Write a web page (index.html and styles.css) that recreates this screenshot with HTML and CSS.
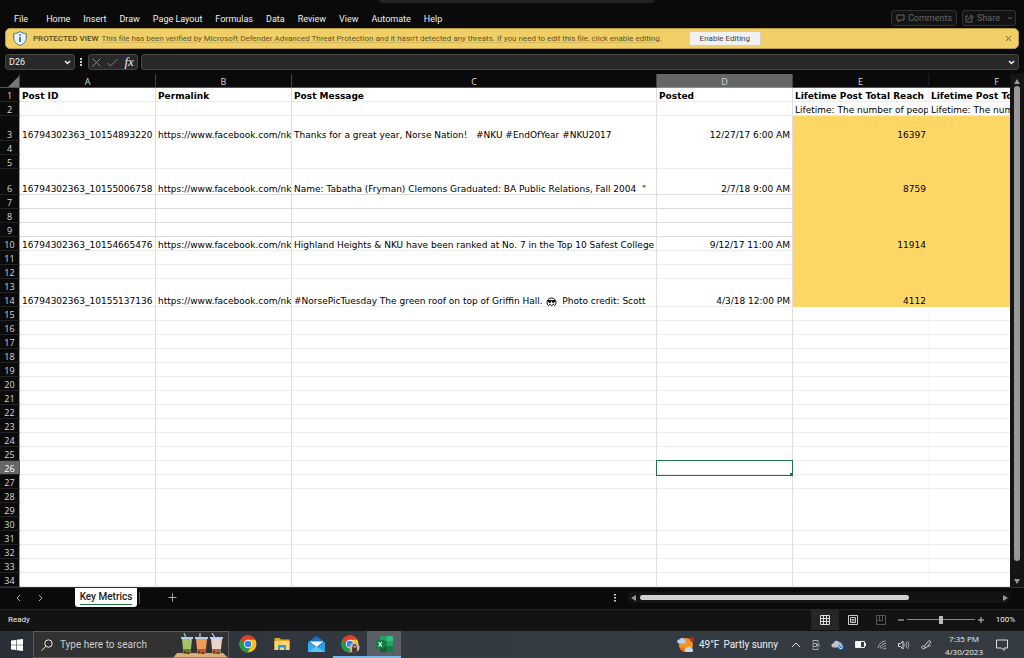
FILE: index.html
```html
<!DOCTYPE html>
<html lang="en">
<head>
  <meta charset="UTF-8" />
  <meta name="viewport" content="width=device-width, initial-scale=1.0"/>
  <title>Key Metrics</title>
  <link rel="stylesheet" href="styles.css">
</head>
<body>

  <header class="ribbon">
    <div class="title-search"></div>
    <nav class="menu">
      <a href="#" class="file">File</a>
      <a href="#">Home</a>
      <a href="#">Insert</a>
      <a href="#">Draw</a>
      <a href="#">Page Layout</a>
      <a href="#">Formulas</a>
      <a href="#">Data</a>
      <a href="#">Review</a>
      <a href="#">View</a>
      <a href="#">Automate</a>
      <a href="#">Help</a>
    </nav>
    <div class="ribbon-actions">
      <button class="ghost">
        <svg width="9" height="9" viewBox="0 0 9 9" fill="none" stroke="currentColor"><path d="M1 1h7v5H4L2.500 8V6H1z"/></svg>
        Comments
      </button>
      <button class="ghost share">
        <svg width="9" height="9" viewBox="0 0 9 9" fill="none" stroke="currentColor"><path d="M3 2H1v6h6V6M3 6c0-2 1-3 3-3V1l2.500 2.500L6 5.500V4"/></svg>
        Share
        <svg class="caret" width="6" height="4" viewBox="0 0 6 4" fill="none" stroke="currentColor"><path d="M1 1l2 2 2-2"/></svg>
      </button>
    </div>
  </header>

  <section class="banner">
    <svg width="14" height="15" viewBox="0 0 14 15"><path d="M7 .5C5 2 3 2.500 .8 2.600v4.400c0 3.500 2.500 6 6.200 7.500 3.700-1.500 6.200-4 6.200-7.500V2.600C11 2.500 9 2 7 .5z" fill="#e9f1f7" stroke="#3d6f9f"/><path d="M7 3.200v1.600M7 6v5" stroke="#1d63ac" stroke-width="1.600"/></svg>
    <strong>PROTECTED VIEW</strong>
    <a href="#">This file has been verified by Microsoft Defender Advanced Threat Protection and it hasn't detected any threats. If you need to edit this file, click enable editing.</a>
    <button class="enable">Enable Editing</button>
    <button class="close" aria-label="Close"><svg width="7" height="7" viewBox="0 0 7 7" stroke="#76672f" fill="none"><path d="M1 1l5 5M6 1L1 6"/></svg></button>
  </section>

  <section class="formula-bar">
    <div class="name-box">
      <input type="text" value="D26" aria-label="Name box">
      <svg width="7" height="5" viewBox="0 0 7 5" fill="none" stroke="#fff" stroke-width="1.300"><path d="M1 1l2.500 2.500L6 1"/></svg>
    </div>
    <svg class="dots" width="3" height="9" viewBox="0 0 3 9" fill="#ccc"><path d="M0 0h2v2H0zM0 3h2v2H0zM0 6h2v2H0z"/></svg>
    <div class="fx-buttons">
      <button aria-label="Cancel"><svg width="9" height="9" viewBox="0 0 9 9" fill="none" stroke="#858585"><path d="M.5 .5l8 8M8.500 .5l-8 8"/></svg></button>
      <button aria-label="Enter"><svg width="11" height="9" viewBox="0 0 11 9" fill="none" stroke="#858585"><path d="M.5 5l3 3L10.500 1"/></svg></button>
      <button class="fx">fx</button>
    </div>
    <div class="formula">
      <input type="text" aria-label="Formula">
      <svg width="7" height="5" viewBox="0 0 7 5" fill="none" stroke="#fff" stroke-width="1.300"><path d="M1 1l2.500 2.500L6 1"/></svg>
    </div>
  </section>

  <main class="workspace">
    <div class="grid-view">
      <table class="sheet">
        <colgroup>
          <col class="w-num"><col class="w-col"><col class="w-col"><col class="w-msg"><col class="w-col"><col class="w-col"><col class="w-col">
        </colgroup>
        <thead>
          <tr>
            <th class="corner"><svg width="11" height="11" viewBox="0 0 11 11"><path d="M11 0v11H0z" fill="#777"/></svg></th>
            <th>A</th><th>B</th><th>C</th><th class="active">D</th><th class="plain">E</th><th class="plain">F</th>
          </tr>
        </thead>
        <tbody id="rows"></tbody>
      </table>
    </div>
    <div class="vscroll">
      <svg width="8" height="6" viewBox="0 0 8 6"><path d="M4 1l3 5H1z" fill="#999"/></svg>
      <div class="vthumb"></div>
      <svg width="8" height="6" viewBox="0 0 8 6"><path d="M4 5l3-5H1z" fill="#999"/></svg>
    </div>
  </main>

  <section class="tab-bar">
    <button class="arrow" aria-label="Previous sheet"><svg width="5" height="8" viewBox="0 0 5 8" fill="none" stroke="#aaa"><path d="M4 1L1 4l3 3"/></svg></button>
    <button class="arrow" aria-label="Next sheet"><svg width="5" height="8" viewBox="0 0 5 8" fill="none" stroke="#aaa"><path d="M1 1l3 3-3 3"/></svg></button>
    <button class="tab"><span>Key Metrics</span></button>
    <span class="divider"></span>
    <button class="add" aria-label="New sheet"><svg width="9" height="9" viewBox="0 0 9 9" stroke="#aaa"><path d="M4.500 .5v8M.5 4.500h8"/></svg></button>
    <svg class="grip" width="3" height="8" viewBox="0 0 3 8" fill="#ccc"><path d="M0 0h2v1.500H0zM0 3h2v1.500H0zM0 6h2v1.500H0z"/></svg>
    <div class="hscroll">
      <svg width="5" height="8" viewBox="0 0 5 8"><path d="M5 1v6L0 4z" fill="#999"/></svg>
      <div class="htrack"><div class="hthumb"></div></div>
      <svg width="5" height="8" viewBox="0 0 5 8"><path d="M0 1v6l5-3z" fill="#999"/></svg>
    </div>
  </section>

  <section class="status">
    <span class="ready">Ready</span>
    <button class="view on" aria-label="Normal"><svg width="10" height="10" viewBox="0 0 10 10" fill="none" stroke="#ddd"><path d="M.5 .5h9v9h-9zM3.500 .5v9M6.500 .5v9M.5 3.500h9M.5 6.500h9"/></svg></button>
    <button class="view" aria-label="Page layout"><svg width="10" height="10" viewBox="0 0 10 10" fill="none" stroke="#ccc"><path d="M.5 .5h9v9h-9zM2.500 2.500h5v5h-5zM3.500 4.500h3M3.500 6h3"/></svg></button>
    <button class="view" aria-label="Page break"><svg width="10" height="10" viewBox="0 0 10 10" fill="none" stroke="#555"><path d="M.5 .5h9v9h-9zM3.500 .5v5M.5 5.500h6V.5"/></svg></button>
    <button class="zoom-btn" aria-label="Zoom out"><svg width="6" height="6" viewBox="0 0 6 6" stroke="#ccc"><path d="M0 3h6"/></svg></button>
    <input type="range" min="0" max="100" value="50" aria-label="Zoom">
    <button class="zoom-btn" aria-label="Zoom in"><svg width="6" height="6" viewBox="0 0 6 6" stroke="#ccc"><path d="M0 3h6M3 0v6"/></svg></button>
    <span class="percent">100%</span>
  </section>

  <footer class="taskbar">
    <button class="start" aria-label="Start"><svg width="12" height="12" viewBox="0 0 12 12" fill="#fff"><path d="M0 1.600l5-.7v4.800H0zM5.600 .8L12 0v5.700H5.600zM0 6.300h5v4.800l-5-.7zM5.600 6.300H12V12l-6.400-.8z"/></svg></button>
    <div class="search">
      <svg width="12" height="12" viewBox="0 0 12 12" fill="none" stroke="#eee"><circle cx="7.500" cy="4.500" r="3.700"/><path d="M5 7.200L.7 11.500"/></svg>
      <input type="text" placeholder="Type here to search" aria-label="Search">
      <svg class="drinks" width="55" height="26" viewBox="0 0 55 26">
        <path d="M4 21h46l5 5H0z" fill="#d9ad7c"/><path d="M0 25h55v1H0z" fill="#a97c50"/>
        <g stroke="#a9c0e6" stroke-width="1.300"><path d="M13 6l-2-5M27 6V1M42 6l-3-5"/></g>
        <path d="M9 7h10l-1.500 15h-7z" fill="#a4c36a"/><path d="M23 7h11l-1.500 15h-8z" fill="#ee9a58"/><path d="M38 7h11l-1.500 15h-8z" fill="#ead5cb"/>
        <path d="M8 5h12v2H8zM22 5h13v2H22zM37 5h13v2H37z" fill="#b9cdec"/>
        <path d="M10 17h8l-.5 5h-7z" fill="#6d7638"/><path d="M24 17h9l-.5 5h-8z" fill="#bd5928"/><path d="M39 17h9l-.5 5h-8z" fill="#a8653f"/>
        <g fill="#4b2b18"><circle cx="12" cy="20" r="1"/><circle cx="15" cy="21" r="1"/><circle cx="26" cy="20" r="1"/><circle cx="30" cy="21" r="1"/><circle cx="41" cy="20" r="1"/><circle cx="45" cy="21" r="1"/></g>
      </svg>
    </div>
    <button class="app" aria-label="Chrome">
      <svg width="18" height="18" viewBox="0 0 18 18"><circle cx="9" cy="9" r="8.500" fill="#fbc116"/><path d="M1.600 4.800A8.500 8.500 0 0 0 8.500 17.500L12.300 11 9 9z" fill="#279847"/><path d="M1.600 4.800L5.500 11.200 8 12.500 9 9z" fill="#279847"/><path d="M1.600 4.800A8.500 8.500 0 0 1 16.400 4.800H9L5.600 7.500z" fill="#e33b2e"/><circle cx="9" cy="9" r="4.200" fill="#fff"/><circle cx="9" cy="9" r="3.300" fill="#3b7de8"/></svg>
    </button>
    <button class="app" aria-label="File Explorer">
      <svg width="16" height="14" viewBox="0 0 16 14"><path d="M.5 1h5l1.500 1.500h8.500V13H.5z" fill="#e5a823"/><path d="M.5 4h15v9H.5z" fill="#fcd56d"/><path d="M4 13V8h8v5H10v-2.500H6V13z" fill="#3a94dc"/></svg>
    </button>
    <button class="app" aria-label="Mail">
      <svg width="17" height="16" viewBox="0 0 17 16"><path d="M0 6l8.500-6L17 6v10H0z" fill="#1473c5"/><path d="M1.500 5.500h14L8.500 11z" fill="#fff"/><path d="M0 6l8.500 5.500L0 16z" fill="#35aef0"/><path d="M17 6l-8.500 5.500L17 16z" fill="#2b9ee6"/><path d="M0 16l8.500-5.500L17 16z" fill="#58c8fb"/></svg>
    </button>
    <button class="app running" aria-label="Chrome profile">
      <svg width="19" height="18" viewBox="0 0 19 18"><circle cx="9" cy="9" r="8.500" fill="#fbc116"/><path d="M1.600 4.800A8.500 8.500 0 0 0 8.500 17.500L12.300 11 9 9z" fill="#279847"/><path d="M1.600 4.800L5.500 11.200 8 12.500 9 9z" fill="#279847"/><path d="M1.600 4.800A8.500 8.500 0 0 1 16.400 4.800H9L5.600 7.500z" fill="#e33b2e"/><circle cx="9" cy="9" r="4.200" fill="#fff"/><circle cx="9" cy="9" r="3.300" fill="#3b7de8"/><circle cx="13.500" cy="12.500" r="5" fill="#c5b8ad"/><path d="M11 16.500c0-4 .5-7.500 2.500-7.500s2.700 3.500 2.500 7.800c-2 1-4 .7-5-.3z" fill="#4d352b"/><circle cx="13.600" cy="11.600" r="1.200" fill="#d6a58c"/></svg>
    </button>
    <button class="app running current" aria-label="Excel">
      <svg width="17" height="16" viewBox="0 0 17 16"><rect x="4" width="13" height="16" rx="1" fill="#185c37"/><path d="M4 1a1 1 0 0 1 1-1h5.500v5H4z" fill="#21a366"/><path d="M10.500 0H16a1 1 0 0 1 1 1v4h-6.500z" fill="#33c481"/><path d="M4 5h6.500v5.500H4z" fill="#107c41"/><path d="M10.500 5H17v5.500h-6.500z" fill="#21a366"/><path d="M10.500 10.500H17V15a1 1 0 0 1-1 1h-5.500z" fill="#107c41"/><rect y="4" width="8.500" height="8.500" rx="1" fill="#107c41"/><path d="M2.600 6l3.300 4.500M5.900 6L2.600 10.500" stroke="#fff" stroke-width="1.200"/></svg>
    </button>

    <div class="tray">
      <a href="#" class="weather">
        <svg width="18" height="16" viewBox="0 0 18 16"><circle cx="9" cy="8" r="7" fill="#f5961d"/><path d="M3 11a7 7 0 0 0 7 4l-4-5z" fill="#ee6f17"/><path d="M2 6.500a2 2 0 0 1 .3-4 3 3 0 0 1 5.500.5 1.900 1.900 0 0 1 0 3.500z" fill="#b9cff4"/><path d="M9 15a2 2 0 0 1 .3-3.800 3 3 0 0 1 5.200 0A2 2 0 0 1 15 15z" fill="#c4d7f8"/><circle cx="15" cy="2.500" r="2.200" fill="#c42b1c"/></svg>
        <span>49°F</span>
        <span>Partly sunny</span>
      </a>
      <div class="tray-icons">
        <svg width="10" height="6" viewBox="0 0 10 6" fill="none" stroke="#ddd"><path d="M1 5l4-4 4 4"/></svg>
        <svg width="8" height="12" viewBox="0 0 8 12" fill="none" stroke="#aaa"><path d="M1 3.500V1.500h5v2M1 8.500v2h5v-2M1 4.500h3.500v3H1zM4.500 6L7 4.500v3z"/></svg>
        <svg width="13" height="10" viewBox="0 0 13 10"><path d="M2.500 7.500A2 2 0 0 1 2.300 3.500 3.300 3.300 0 0 1 8.500 2.500 2.500 2.500 0 0 1 9 7.500z" fill="#c3c6ca"/><circle cx="9.800" cy="7" r="2.800" fill="#2e83d2"/><path d="M8.300 6.500a1.600 1.600 0 0 1 3 0M11.300 7.500a1.600 1.600 0 0 1-3 0" stroke="#fff" fill="none"/></svg>
        <svg width="11" height="7" viewBox="0 0 11 7"><path d="M.5 .5h9v6h-9z" fill="none" stroke="#eee"/><path d="M1 1h5v5H1z" fill="#fff"/><path d="M10 2h1v3h-1z" fill="#eee"/></svg>
        <svg width="10" height="10" viewBox="0 0 10 10" fill="none" stroke="#aaa"><path d="M1 8A8 8 0 0 1 8.500 1M3 8.500A5.500 5.500 0 0 1 9 3.500M5 9a3.500 3.500 0 0 1 4-3"/><circle cx="8" cy="8.500" r=".6" fill="#ddd"/></svg>
        <svg width="12" height="10" viewBox="0 0 12 10" fill="none" stroke="#999"><path d="M.5 3.500h2L5 1v8L2.500 6.500h-2z" stroke="#ddd"/><path d="M6.500 3.500q1 1.500 0 3M8 2q2 3 0 6M9.700 1q2.500 4 0 8"/></svg>
        <svg width="11" height="11" viewBox="0 0 11 11" fill="none" stroke="#ccc"><path d="M3 7.500L8 1.500l2 1.500-5 6zM3 7.500C1 6 0 7.500 1 9s3 1 3.500-1M7 8c1-1.500 2.500-1.500 3-1"/></svg>
      </div>
      <div class="clock"><span>7:35 PM</span><span>4/30/2023</span></div>
      <svg width="12" height="12" viewBox="0 0 12 12" fill="none" stroke="#ddd"><path d="M.5 1h11v8H8v2.500L5.500 9h-5z"/></svg>
    </div>
  </footer>

  <script>
    const face = '<svg class="face" width="11" height="11" viewBox="0 0 11 11"><circle cx="5.500" cy="5.500" r="4.500" fill="#fff" stroke="#111"/><path d="M1 3h4.500L5 5.500 3.500 6 2 5zM5.500 3H10L9 5 7.500 6 6 5.500z" fill="#111"/><path d="M3 7q2.500 3 5 0" fill="none" stroke="#111"/></svg>';

    // text for the filled rows, columns A to F
    const data = {
      1: ['Post ID', 'Permalink', 'Post Message', 'Posted', 'Lifetime Post Total Reach', 'Lifetime Post Total'],
      2: ['', '', '', '', 'Lifetime: The number of people', 'Lifetime: The number'],
      3: ['16794302363_10154893220', 'https://www.facebook.com/nk', 'Thanks for a great year, Norse Nation!&nbsp;&nbsp; #NKU #EndOfYear #NKU2017', '12/27/17 6:00 AM', '16397', ''],
      6: ['16794302363_10155006758', 'https://www.facebook.com/nk', 'Name: Tabatha (Fryman) Clemons Graduated: BA Public Relations, Fall 2004&nbsp; "', '2/7/18 9:00 AM', '8759', ''],
      10: ['16794302363_10154665476', 'https://www.facebook.com/nk', 'Highland Heights &amp; NKU have been ranked at No. 7 in the Top 10 Safest College', '9/12/17 11:00 AM', '11914', ''],
      14: ['16794302363_10155137136', 'https://www.facebook.com/nk', '#NorsePicTuesday The green roof on top of Griffin Hall. ' + face + '&nbsp; Photo credit: Scott', '4/3/18 12:00 PM', '4112', '']
    };
    const noLine = [3, 4, 13, 28, 29];
    const darkLine = [6, 7, 8, 9];

    let html = '';
    for (let r = 1; r <= 34; r++) {
      const cls = ['r' + r];
      if (r >= 3 && r <= 14) cls.push('hot');
      if (noLine.includes(r)) cls.push('no-line');
      if (darkLine.includes(r)) cls.push('dark-line');
      html += '<tr class="' + cls.join(' ') + '"><th>' + r + '</th>';
      for (let c = 0; c < 6; c++) {
        const text = data[r] ? data[r][c] : '';
        const picked = r === 26 && c === 3;
        html += picked ? '<td class="picked"><i></i></td>' : '<td>' + text + '</td>';
      }
      html += '</tr>';
    }
    document.getElementById('rows').innerHTML = html;
  </script>
</body>
</html>
```
FILE: styles.css
```css
* {
  box-sizing: border-box;
}

body {
  margin: 0;
  height: 100vh;
  display: flex;
  flex-direction: column;
  overflow: hidden;
  background: #0a0a0a;
  color: #eee;
  font-family: Roboto, "Open Sans", sans-serif;
  font-size: 9px;
  line-height: 12px;
}

button, input {
  font: inherit;
  color: inherit;
  background: none;
  border: none;
  padding: 0;
  margin: 0;
  min-width: 0;
}

button {
  display: flex;
  align-items: center;
  justify-content: center;
}

svg {
  flex: none;
}

a {
  color: inherit;
  text-decoration: none;
}

/* ribbon */
.ribbon {
  position: relative;
  height: 28px;
  flex: none;
  display: flex;
  justify-content: space-between;
  padding: 10px 8px 0 14px;
}

.title-search {
  position: absolute;
  top: 0;
  left: 37%;
  right: 36%;
  height: 3px;
  background: #222;
  border-radius: 0 0 4px 4px;
}

.menu {
  display: flex;
  gap: 13px;
  padding-top: 3px;
  white-space: nowrap;
}

.menu .file {
  margin-right: 5px;
}

.ribbon-actions {
  display: flex;
  gap: 5px;
}

.ghost {
  height: 16px;
  width: 66px;
  gap: 3px;
  border: 1px solid #333;
  border-radius: 3px;
  background: #131313;
  color: #666;
}

.share {
  width: 54px;
}

.caret {
  margin-left: 4px;
}

/* protected view banner */
.banner {
  flex: none;
  height: 21px;
  margin: 0 5px;
  padding: 0 6px 0 7px;
  display: flex;
  align-items: center;
  background: #f0d066;
  border: 1px solid #b79a43;
  border-radius: 5px;
  color: #54491f;
  font-size: 8px;
  white-space: nowrap;
}

.banner strong {
  font-weight: 500;
  margin: 0 3px 0 6px;
}

.banner a {
  color: #5f5328;
  text-decoration: underline;
  text-decoration-color: #d4b85a;
}

.enable {
  width: 72px;
  height: 15px;
  margin-left: 27px;
  background: #f1f1f1;
  border: 1px solid #d5d0bd;
  border-radius: 2px;
  color: #444;
}

.close {
  margin-left: auto;
}

/* formula bar */
.formula-bar {
  flex: none;
  display: flex;
  align-items: center;
  height: 16px;
  margin: 5px 5px 4px;
}

.name-box, .fx-buttons, .formula {
  display: flex;
  align-items: center;
  height: 16px;
  background: #292929;
  border: 1px solid #454545;
  border-radius: 3px;
}

.name-box {
  width: 70px;
  padding: 0 3px;
}

.name-box input, .formula input {
  flex: 1;
}

.dots {
  margin: 0 5px;
}

.fx-buttons {
  width: 50px;
  justify-content: space-around;
}

.fx {
  font-family: "Liberation Serif", serif;
  font-style: italic;
  font-size: 13px;
}

.formula {
  flex: 1;
  margin-left: 3px;
  padding: 0 3px;
}

/* sheet */
.workspace {
  flex: 1;
  min-height: 0;
  display: flex;
}

.grid-view {
  flex: 1;
  min-width: 0;
  overflow: hidden;
  background: #fff;
}

.sheet {
  width: 1065px;
  table-layout: fixed;
  border-collapse: separate;
  border-spacing: 0;
  color: #000;
  font-family: "DejaVu Sans", sans-serif;
  line-height: 10px;
}

.w-num { width: 20px; }
.w-col { width: 136px; }
.w-msg { width: 365px; }

.sheet th {
  padding: 0;
  height: 14px;
  background: #0a0a0a;
  color: #d8d8d8;
  font-family: "Open Sans", "Noto Sans", sans-serif;
  font-size: 9px;
  font-weight: normal;
}

.sheet thead th {
  padding-top: 2px;
  border-right: 1px solid #444;
  border-bottom: 1px solid #555;
}

.sheet thead .active {
  background: #666;
  border-bottom-color: #6fa287;
}

.sheet thead .plain {
  border-right-color: #1c1c1c;
}

.sheet .corner {
  text-align: right;
}

.corner svg {
  display: block;
  margin-left: auto;
}

.sheet tbody th {
  vertical-align: bottom;
  border-right: 1px solid #999;
  border-bottom: 1px solid #222;
}

.sheet td {
  height: 14px;
  padding: 0 2px;
  vertical-align: bottom;
  overflow: hidden;
  white-space: nowrap;
  border-right: 1px solid #dedede;
  border-bottom: 1px solid #ececec;
}

.sheet .no-line td {
  border-bottom-color: #fff;
}

.sheet .dark-line td {
  border-bottom-color: #dcdcdc;
}

.sheet td:nth-child(6) {
  border-right-color: #f6f6f6;
}

.sheet td:nth-child(5) {
  text-align: right;
}

.sheet .hot td:nth-child(n+6) {
  background: #fdd766;
  border-color: #fdd766;
  text-align: right;
}

.sheet .r1 td {
  font-weight: bold;
  text-align: left;
}

.sheet .r3 td { height: 25px; }
.sheet .r6 td { height: 26px; }

.sheet .r26 th {
  background: #666;
  color: #fff;
  border-right-color: #217346;
}

.sheet .picked {
  position: relative;
  overflow: visible;
}

/* selection frame with its fill handle */
.picked i {
  position: absolute;
  inset: -1px -1px -2px -1px;
  border: 1px solid #217346;
}

.picked i::after {
  content: "";
  position: absolute;
  right: -1px;
  bottom: -1px;
  width: 3px;
  height: 3px;
  background: #217346;
}

.face {
  vertical-align: -2px;
  margin: -2px 0;
}

.vscroll {
  width: 14px;
  padding: 4px 0 2px;
  display: flex;
  flex-direction: column;
  align-items: center;
  background: #151515;
}

.vthumb {
  flex: 1;
  width: 6px;
  margin: 2px 0 18px;
  background: #999;
  border-radius: 3px;
}

/* sheet tabs */
.tab-bar {
  flex: none;
  height: 22px;
  display: flex;
  align-items: center;
  padding: 0 13px 2px 15px;
  border-top: 1px solid #333;
}

.arrow {
  width: 6px;
  margin-right: 16px;
}

.tab {
  align-self: flex-start;
  width: 62px;
  height: 19px;
  margin-left: 16px;
  background: #fff;
  border-radius: 0 0 3px 3px;
  color: #222;
  font-size: 10px;
  font-weight: 500;
}

.tab span {
  border-bottom: 1px solid #217346;
  line-height: 14px;
}

.divider {
  width: 1px;
  height: 12px;
  margin-left: 2px;
  background: #555;
}

.add {
  margin-left: 28px;
}

.grip {
  margin-left: auto;
  margin-right: 10px;
}

.hscroll {
  width: 384px;
  height: 11px;
  padding: 0 3px 0 4px;
  display: flex;
  align-items: center;
  gap: 4px;
  background: #131313;
  border-radius: 5px;
}

.htrack {
  flex: 1;
}

.hthumb {
  width: 75%;
  height: 5px;
  background: #d0d0d0;
  border-radius: 3px;
}

/* status bar */
.status {
  flex: none;
  height: 22px;
  display: flex;
  align-items: center;
  padding: 0 9px 2px 8px;
  background: #131313;
  border-top: 1px solid #262626;
  font-size: 8px;
}

.ready {
  margin-right: auto;
}

.view {
  width: 28px;
  height: 21px;
}

.view.on {
  background: #262626;
}

.zoom-btn {
  width: 12px;
  height: 12px;
}

.status input {
  appearance: none;
  width: 68px;
  height: 8px;
  background: linear-gradient(#888, #888) center / 100% 1px no-repeat;
}

.status input::-webkit-slider-thumb {
  appearance: none;
  width: 4px;
  height: 8px;
  background: #bbb;
}

.percent {
  width: 28px;
  text-align: right;
}

/* taskbar */
.taskbar {
  flex: none;
  height: 27px;
  display: flex;
  background: linear-gradient(90deg, #2a2f38, #343a42 40%, #353b43);
  font-size: 10px;
}

.start {
  width: 33px;
}

.search {
  width: 196px;
  display: flex;
  align-items: center;
  padding-left: 7px;
  background: #323232;
  border: 1px solid #5a5a5a;
}

.search input {
  flex: 1;
  margin-left: 7px;
}

.search input::placeholder {
  color: #ccc;
  opacity: 1;
}

.app {
  width: 34px;
  border-bottom: 2px solid transparent;
}

.search + .app {
  margin-left: 2px;
}

.running {
  border-color: #76b9ed;
}

.current {
  background: #5b5f66;
}

.tray {
  flex: 1;
  display: flex;
  align-items: center;
  justify-content: flex-end;
  gap: 13px;
  padding-right: 16px;
  white-space: nowrap;
}

.tray-icons {
  display: flex;
  align-items: center;
  gap: 11px;
}

.weather {
  display: flex;
  align-items: center;
  gap: 4px;
}

.clock {
  display: flex;
  flex-direction: column;
  align-items: center;
  font-family: "Open Sans", "Noto Sans", sans-serif;
  font-size: 8px;
  line-height: 13px;
}
```
